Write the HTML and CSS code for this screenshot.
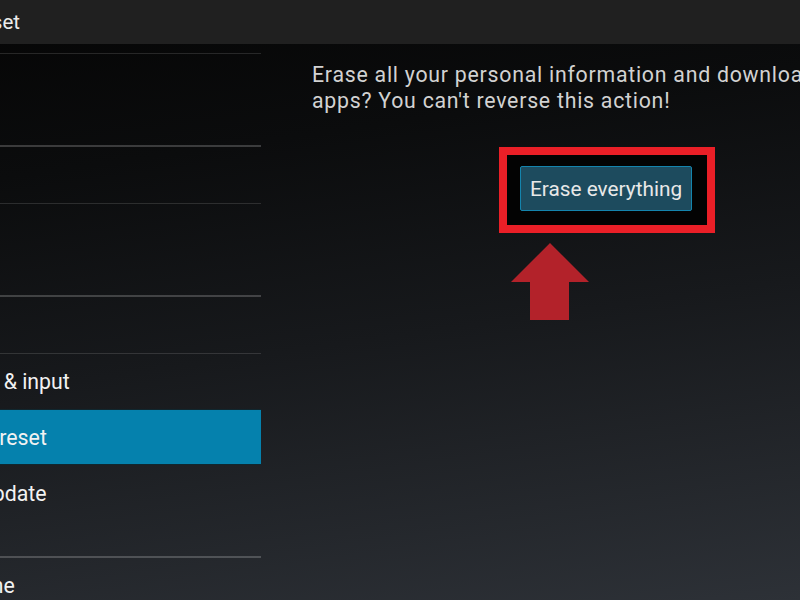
FILE: index.html
```html
<!DOCTYPE html>
<html lang="en">
<head>
  <meta charset="UTF-8" />
  <meta name="viewport" content="width=device-width, initial-scale=1" />
  <title>Factory data reset</title>
  <link rel="stylesheet" href="styles.css">
</head>
<body>
  <header class="actionbar">
    <div class="actionbar-title"><span>Factory data reset</span></div>
  </header>

  <div class="content">
    <ul class="pane">
      <li class="item item-top"></li>
      <li class="item item-tall item-thick">Storage</li>
      <li class="item">Apps</li>
      <li class="item item-tall item-thick">Users</li>
      <li class="item">Security</li>
      <li class="item item-plain">Language &amp; input</li>
      <li class="item item-plain item-active">Backup &amp; reset</li>
      <li class="item item-plain">System update</li>
      <li class="item item-header item-thick">SYSTEM</li>
      <li class="item item-plain">Date &amp; time</li>
    </ul>

    <section class="detail">
      <p class="detail-text">Erase all your personal information and downloaded apps? You can't reverse this action!</p>

      <div class="highlight">
        <button class="erase-btn" type="button">Erase everything</button>
      </div>

      <svg class="arrow" width="78" height="78" viewBox="0 0 78 78">
        <polygon points="39,0 78,39 58,39 58,77 19,77 19,39 0,39" fill="#b3222a" />
      </svg>
    </section>
  </div>
</body>
</html>
```

FILE: styles.css
```css
* {
  box-sizing: border-box;
}
html,
body {
  width: 800px;
  height: 600px;
}
body {
  margin: 0;
  overflow: hidden;
  font-family: Roboto, 'Noto Sans', sans-serif;
  font-size: 21.3px;
  color: #e6e6e6;
  background: linear-gradient(172deg, #050505 0%, #0b0c0d 25%, #17191c 55%, #2d3137 100%);
}

/* Action bar */
.actionbar {
  height: 44px;
  background-color: #202020;
  display: flex;
  align-items: center;
}
.actionbar-title {
  width: 20px;
  display: flex;
  justify-content: flex-end;
  white-space: nowrap;
  font-size: 20.5px;
  color: #ececec;
}

.content {
  display: flex;
  height: 556px;
}

/* Left settings list */
.pane {
  list-style: none;
  margin: 0 0 0 -111px;
  padding: 0;
  width: 372px;
  flex: 0 0 372px;
}
.item {
  height: 57px;
  padding-left: 16px;
  display: flex;
  align-items: center;
  white-space: nowrap;
  color: #f2f2f2;
  border-bottom: 1px solid rgba(255, 255, 255, 0.13);
}
.item-top {
  height: 10px;
}
.item-tall {
  height: 93px;
}
.item-header {
  height: 37px;
  font-size: 13px;
  color: transparent;
}
.item-thick {
  border-bottom: 2px solid rgba(255, 255, 255, 0.2);
}
.item-plain {
  height: 55px;
  border-bottom: none;
}
.item-plain + .item-plain {
  height: 56px;
}
.item-active {
  background-color: #0581ad;
  border-top: 1px solid #10272f;
  border-bottom: 1px solid #10272f;
}

/* Right detail */
.detail {
  flex: 0 0 600px;
  padding: 18px 0 0 51px;
}
.detail-text {
  margin: 0;
  width: 540px;
  line-height: 26px;
  letter-spacing: 0.75px;
  color: #d2d2d2;
}
.highlight {
  display: inline-block;
  margin: 33px 0 0 187px;
  padding: 11px 15px 14px 13px;
  border: 8px solid #ea1f27;
  background-color: #030303;
}
.erase-btn {
  display: block;
  height: 45px;
  padding: 0 9px;
  font-family: inherit;
  font-size: 20.8px;
  color: #e8e8e8;
  background-color: #1d4b5e;
  border: 1px solid #1484ad;
  border-radius: 2px;
}
.arrow {
  display: block;
  margin: 10px 0 0 199px;
}
```
